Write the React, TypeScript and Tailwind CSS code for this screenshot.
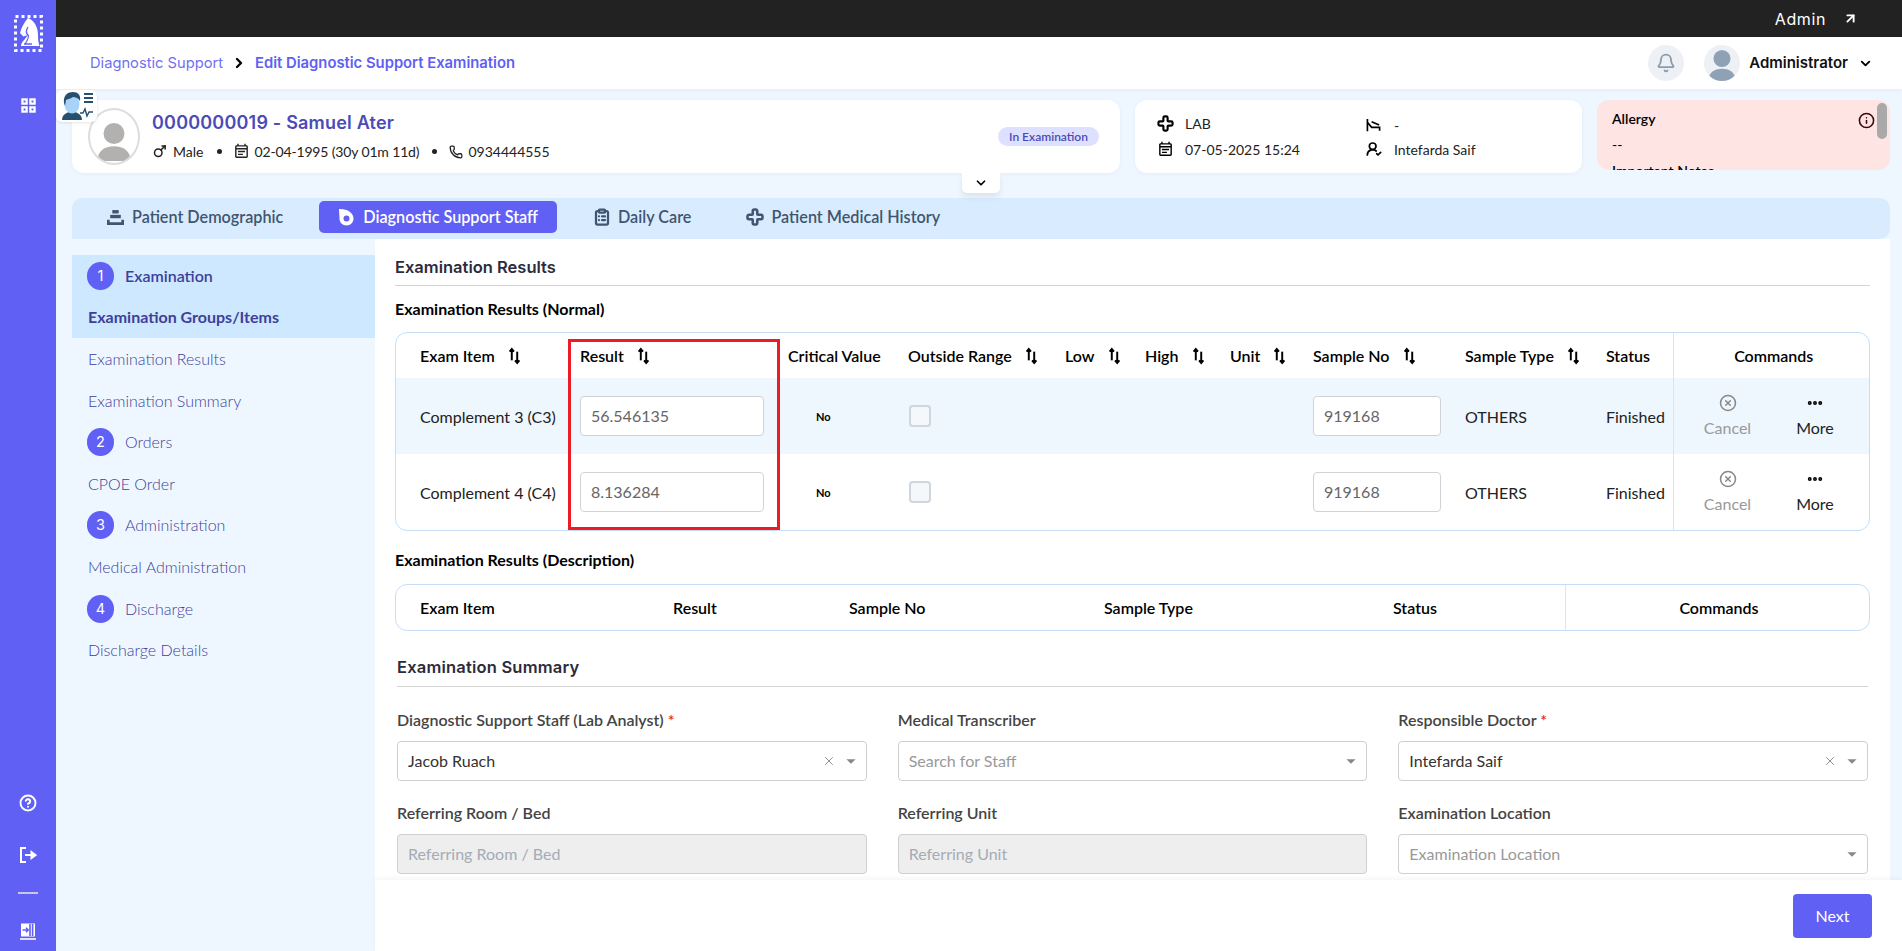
import { ArrowUpRight, Bell, ChevronDown, ChevronRight, CircleHelp, CircleX, ClipboardList, Cross, Ellipsis, Info, Mars, Phone, UserRoundCheck, X } from 'lucide-react';
import { MdArrowDropDown, MdOutlineEventNote } from 'react-icons/md';

const heading = "font-['Inter',sans-serif]";

function SortIcon() {
  return (
    <svg viewBox="0 0 12 16" className="h-[18px] w-[13px] shrink-0 text-black" fill="none" stroke="currentColor" strokeWidth="1.800">
      <path d="M3.500 12V2" />
      <path d="M1.500 4 3.500 1.600 5.500 4" fill="currentColor" />
      <path d="M8.500 14V4" />
      <path d="M6.500 12 8.500 14.400 10.500 12" fill="currentColor" />
    </svg>
  );
}

function Avatar({ color, size }: { color: string; size: string }) {
  return (
    <svg viewBox="0 0 40 40" className={size}>
      <circle cx="20" cy="15" r="9.500" fill={color} />
      <path d="M5 40c0-9 6-13.500 15-13.500S35 31 35 40z" fill={color} />
    </svg>
  );
}

function Logo() {
  return (
    <svg viewBox="0 0 29 37" className="mt-[15px] h-[37px] w-[29px]">
      <rect x="1.500" y="1.500" width="26" height="34" fill="none" stroke="white" strokeWidth="3" strokeDasharray="3 3" />
      <path d="M14 3c6 2 10 9 10 17 0 5 .5 8 1.500 11H7c0-4 5-7 6.500-11l-4 1.500L6 18c1.500-6 4-10 8-15z" fill="white" />
      <path d="M14 12c-2 3-2 6 0 8 1.500 2-1 6-3 9M10 29h8" fill="none" stroke="#6060f5" strokeWidth="1.300" />
    </svg>
  );
}

function Rail() {
  return (
    <aside className="flex h-full w-[56px] shrink-0 flex-col items-center bg-[#6060f5]">
      <Logo />
      <svg viewBox="0 0 16 16" className="mt-[46px] h-[15px] w-[15px]" fill="none" stroke="white" strokeWidth="2.400">
        <rect x="1.500" y="1.500" width="4.500" height="4.500" />
        <rect x="10" y="1.500" width="4.500" height="4.500" />
        <rect x="1.500" y="10" width="4.500" height="4.500" />
        <rect x="10" y="10" width="4.500" height="4.500" />
      </svg>
      <div className="mt-auto flex flex-col items-center pb-[11px]">
        <CircleHelp className="h-[18px] w-[18px] text-white" strokeWidth={2.6} />
        <svg viewBox="0 0 18 18" className="mt-[34px] h-[18px] w-[18px]" fill="none" stroke="white" strokeWidth="2">
          <path d="M7 2H2v14h5" />
          <path d="M6 9h8" />
          <path d="M12.500 6 16.500 9l-4 3z" fill="white" />
        </svg>
        <div className="mt-[28px] h-[2px] w-[20px] bg-[#c8c8dc]" />
        <svg viewBox="0 0 18 18" className="mt-[28px] h-[18px] w-[18px]" fill="none" stroke="white" strokeWidth="1.600">
          <rect x="2" y="1.500" width="14" height="13" fill="white" stroke="none" />
          <path d="M11 2v12M13.600 2v12M3.500 8H9M7 5.800 9.200 8 7 10.200" stroke="#6060f5" />
          <path d="M1 17h16" />
        </svg>
      </div>
    </aside>
  );
}

function Header() {
  return (
    <>
      <div className="flex h-[37px] shrink-0 items-center justify-end bg-[#222222] pr-[44px] text-white">
        <span className={`${heading} text-[16px] tracking-[0.6px]`}>Admin</span>
        <ArrowUpRight className="ml-[17px] h-[15px] w-[15px]" strokeWidth={3} />
      </div>
      <div className="relative z-10 flex h-[52px] shrink-0 items-center bg-white pl-[34px] pr-[29px] shadow-[0_1px_4px_rgba(0,0,0,0.05)]">
        <span className={`${heading} text-[14.700px] text-[#6f6ff2]`}>Diagnostic Support</span>
        <ChevronRight className="mx-[8px] h-[16px] w-[16px] text-black" strokeWidth={3.5} />
        <span className={`${heading} text-[14.800px] font-semibold text-[#6060f5]`}>Edit Diagnostic Support Examination</span>
        <div className="ml-auto flex h-[36px] w-[36px] items-center justify-center rounded-full bg-[#edf0f5]">
          <Bell className="h-[20px] w-[20px] text-[#8a9bad]" strokeWidth={2.2} />
        </div>
        <div className="ml-[20px] flex h-[36px] w-[36px] items-center justify-center overflow-hidden rounded-full bg-[#edf0f5]">
          <Avatar color="#8fa2b5" size="h-[36px] w-[36px]" />
        </div>
        <span className={`${heading} ml-[9px] text-[15px] font-semibold text-[#111]`}>Administrator</span>
        <ChevronDown className="ml-[10px] h-[15px] w-[15px] text-black" strokeWidth={3} />
      </div>
    </>
  );
}

function PatientRow() {
  return (
    <div className="relative flex shrink-0 items-start gap-[15px] pl-[16px] pr-[12px] pt-[11px] text-[14px]">
      <div className="relative flex h-[73px] w-[1048px] items-center rounded-[12px] bg-white pl-[16px] pr-[21px] shadow-[0_1px_4px_rgba(60,90,130,0.05)]">
        <div className="flex h-[57px] w-[52px] items-end justify-center overflow-hidden rounded-[50%] border-2 border-[#dddddd] bg-white">
          <Avatar color="#b3b1af" size="h-[48px] w-[44px]" />
        </div>
        <div className="ml-[12px] flex flex-col pt-[1px]">
          <div className={`${heading} text-[18px] font-semibold leading-[24px] tracking-[0.2px] text-[#4b4bb8]`}>0000000019 - Samuel Ater</div>
          <div className="mt-[5px] flex h-[24px] items-center text-[#222]">
            <Mars className="h-[15px] w-[15px]" strokeWidth={2.4} />
            <span className="ml-[6px]">Male</span>
            <span className="ml-[14px] h-[5px] w-[5px] rounded-full bg-[#222]" />
            <MdOutlineEventNote className="ml-[11px] h-[17px] w-[17px]" />
            <span className="ml-[4px] tracking-[-0.15px]">02-04-1995 (30y 01m 11d)</span>
            <span className="ml-[13px] h-[5px] w-[5px] rounded-full bg-[#222]" />
            <Phone className="ml-[12px] h-[14px] w-[14px]" strokeWidth={2.2} />
            <span className="ml-[5px]">0934444555</span>
          </div>
        </div>
        <span className="ml-auto flex h-[19px] w-[101px] items-center justify-center rounded-full bg-[#dde1ff] text-[12px] font-semibold text-[#4b4bb8]">In Examination</span>
      </div>
      <div className="flex h-[73px] w-[447px] rounded-[12px] bg-white pl-[22px] pt-[10px] text-[#222] shadow-[0_1px_4px_rgba(60,90,130,0.05)]">
        <div className="flex w-[209px] flex-col">
          <div className="flex h-[26px] items-center">
            <Cross className="h-[17px] w-[17px] text-black" strokeWidth={3} />
            <span className="ml-[11px]">LAB</span>
          </div>
          <div className="flex h-[26px] items-center">
            <MdOutlineEventNote className="h-[17px] w-[17px] text-black" />
            <span className="ml-[11px]">07-05-2025 15:24</span>
          </div>
        </div>
        <div className="flex flex-col">
          <div className="flex h-[26px] items-center pt-[5px]">
            <svg viewBox="0 0 16 16" className="h-[15px] w-[15px]" fill="none" stroke="black" strokeWidth="1.800">
              <path d="M1.500 1v13M1.500 4.500 6 10h8.500v3.500M6 4l8 3.500" />
            </svg>
            <span className="ml-[13px]">-</span>
          </div>
          <div className="flex h-[26px] items-center">
            <UserRoundCheck className="h-[16px] w-[16px] text-black" strokeWidth={2.6} />
            <span className="ml-[12px]">Intefarda Saif</span>
          </div>
        </div>
      </div>
      <div className="relative h-[70px] w-[293px] overflow-hidden rounded-[12px] bg-[#ffe4e4] pl-[15px] pt-[9px] text-[14px] text-black">
        <div className="font-semibold leading-[20px]">Allergy</div>
        <div className="mt-[6px] leading-[20px]">--</div>
        <div className="mt-[6px] font-semibold leading-[20px]">Important Notes</div>
        <Info className="absolute right-[15px] top-[12px] h-[17px] w-[17px] text-[#3a0808]" strokeWidth={2.2} />
        <div className="absolute right-[3px] top-[3px] h-[36px] w-[10px] rounded-full bg-[#a9a9a9]" />
      </div>
      <div className="absolute left-[906px] top-[84px] z-10 flex h-[20px] w-[38px] items-center justify-center rounded-b-[5px] bg-white shadow-[0_4px_6px_rgba(0,0,0,0.08)]">
        <ChevronDown className="h-[14px] w-[14px] text-black" strokeWidth={3} />
      </div>
    </div>
  );
}

function DiagnosticIcon() {
  return (
    <svg viewBox="0 0 16 18" className="h-[18px] w-[16px]">
      <path
        fillRule="evenodd"
        fill="white"
        d="M1 1c3.500 0 9 .5 11.500 3.500C14.400 6 15.500 8 15.500 10.500 15.500 14.500 12.500 17.500 8.500 17.500S1.500 14.500 1.500 10.500C1.500 7 1 4 1 1ZM8.500 7.500a3 3 0 1 0 0 6 3 3 0 0 0 0-6Z"
      />
    </svg>
  );
}

function Tabs() {
  return (
    <div className="mx-[12px] ml-[16px] mt-[25px] flex h-[41px] shrink-0 items-start gap-[17px] rounded-t-[10px] rounded-br-[10px] bg-[#d9ecff] pl-[16px] pt-[3px] text-[16.200px] font-semibold text-[#3f5570]">
      <div className="flex h-[32px] items-center gap-[8px] px-[19px]">
        <svg viewBox="0 0 16 16" className="h-[17px] w-[17px]" fill="#3f5570">
          <rect x="5" y="1" width="6" height="3.200" />
          <rect x="3" y="5.500" width="10" height="3.200" />
          <path d="M0 10h2.500v2.500h11V10H16v5H0z" />
        </svg>
        Patient Demographic
      </div>
      <div className="flex h-[32px] items-center gap-[9px] rounded-[5px] bg-[#6060f5] px-[19px] text-white">
        <DiagnosticIcon />
        Diagnostic Support Staff
      </div>
      <div className="flex h-[32px] items-center gap-[7px] px-[19px]">
        <ClipboardList className="h-[18px] w-[18px]" strokeWidth={3} />
        Daily Care
      </div>
      <div className="flex h-[32px] items-center gap-[7px] px-[19px]">
        <Cross className="h-[18px] w-[18px]" strokeWidth={3.4} />
        Patient Medical History
      </div>
    </div>
  );
}

function StepRow({ n, label, active }: { n: number; label: string; active?: boolean }) {
  return (
    <div className={`flex h-[41.600px] items-center pl-[15px] text-[16px] text-[#3f3f9a] ${active ? 'bg-[#cde8ff] font-semibold' : 'font-light'}`}>
      <span className={`${heading} flex h-[28px] w-[27px] items-center justify-center rounded-full bg-[#6060f5] text-[14.500px] font-normal text-white`}>{n}</span>
      <span className="ml-[11px]">{label}</span>
    </div>
  );
}

function SubRow({ label, active }: { label: string; active?: boolean }) {
  return (
    <div className={`flex h-[41.600px] items-center pl-[16px] text-[16px] text-[#3f3f9a] ${active ? 'bg-[#cde8ff] font-bold' : 'font-light'}`}>{label}</div>
  );
}

function StepMenu() {
  return (
    <nav className="h-full w-[303px] shrink-0 bg-[#eef7ff] pt-[16px]">
      <StepRow n={1} label="Examination" active />
      <SubRow label="Examination Groups/Items" active />
      <SubRow label="Examination Results" />
      <SubRow label="Examination Summary" />
      <StepRow n={2} label="Orders" />
      <SubRow label="CPOE Order" />
      <StepRow n={3} label="Administration" />
      <SubRow label="Medical Administration" />
      <StepRow n={4} label="Discharge" />
      <SubRow label="Discharge Details" />
    </nav>
  );
}

const normalCols = [172, 208, 120, 157, 80, 85, 83, 152, 141, 79, 196];
const normalHead: [string, boolean][] = [
  ['Result', true],
  ['Critical Value', false],
  ['Outside Range', true],
  ['Low', true],
  ['High', true],
  ['Unit', true],
  ['Sample No', true],
  ['Sample Type', true],
  ['Status', false],
];

function TextBox({ value, w }: { value: string; w: string }) {
  return (
    <div className={`flex h-[40px] ${w} items-center rounded-[4px] border border-[#cfd3d8] bg-white pl-[10px] text-[16px] text-[#666]`}>{value}</div>
  );
}

function ResultRow({ name, result, shaded }: { name: string; result: string; shaded?: boolean }) {
  const cell = 'p-0 pl-[12px] align-middle';
  const textCell = 'p-0 pl-[12px] pt-[2px] align-middle';
  return (
    <tr className={`h-[76px] text-[16px] text-[#222] ${shaded ? 'bg-[#eef6fe]' : ''}`}>
      <td className="p-0 pl-[24px] pt-[2px] align-middle">{name}</td>
      <td className={cell}><TextBox value={result} w="w-[184px]" /></td>
      <td className="p-0 pl-[40px] pt-[2px] align-middle text-[11px] font-bold text-black">No</td>
      <td className={cell}><div className="ml-[1px] h-[22px] w-[22px] rounded-[4px] border-2 border-[#cfd6dd] bg-[#f5f8fb]" /></td>
      <td />
      <td />
      <td />
      <td className={cell}><TextBox value="919168" w="w-[128px]" /></td>
      <td className={textCell}>OTHERS</td>
      <td className={textCell}>Finished</td>
      <td className="border-l border-[#d5e6f5] p-0 pt-[2px] align-middle">
        <div className="flex justify-between px-[30px]">
          <div className="flex w-[48px] flex-col items-center gap-[4px] text-[#999]">
            <CircleX className="h-[18px] w-[18px] text-[#888]" strokeWidth={2} />
            Cancel
          </div>
          <div className="flex w-[48px] flex-col items-center gap-[4px]">
            <Ellipsis className="h-[18px] w-[18px] text-black" strokeWidth={3.2} />
            More
          </div>
        </div>
      </td>
    </tr>
  );
}

function NormalTable() {
  return (
    <div className="relative mt-[12px] w-[1475px] rounded-[12px] border border-[#c5def5]">
      <table className="w-full table-fixed border-collapse">
        <colgroup>
          {normalCols.map((w, i) => (
            <col key={i} style={{ width: w }} />
          ))}
        </colgroup>
        <thead>
          <tr className="h-[45px] text-[16px] font-semibold text-black">
            <th className="p-0 pl-[24px] text-left font-semibold">
              <span className="flex items-center gap-[13px]">Exam Item <SortIcon /></span>
            </th>
            {normalHead.map(([label, sort]) => (
              <th key={label} className="p-0 pl-[12px] text-left font-semibold">
                <span className="flex items-center gap-[13px] whitespace-nowrap">
                  {label}
                  {sort && <SortIcon />}
                </span>
              </th>
            ))}
            <th className="border-l border-[#d5e6f5] p-0 pl-[5px] text-center font-semibold">Commands</th>
          </tr>
        </thead>
        <tbody>
          <ResultRow name="Complement 3 (C3)" result="56.546135" shaded />
          <ResultRow name="Complement 4 (C4)" result="8.136284" />
        </tbody>
      </table>
      <div className="absolute left-[172px] top-[6px] h-[191px] w-[212px] border-[3px] border-[#ed1c24]" />
    </div>
  );
}

function DescriptionTable() {
  return (
    <div className="mt-[12px] flex h-[47px] w-[1475px] items-center rounded-[12px] border border-[#c5def5] text-[16px] font-semibold text-black">
      <div className="w-[277px] pl-[24px]">Exam Item</div>
      <div className="w-[176px]">Result</div>
      <div className="w-[255px]">Sample No</div>
      <div className="w-[289px]">Sample Type</div>
      <div className="w-[172px]">Status</div>
      <div className="flex h-full flex-1 items-center justify-center border-l border-[#d5e6f5] pl-[3px]">Commands</div>
    </div>
  );
}

function Field({ label, required, value, placeholder, clear, disabled, select }: { label: string; required?: boolean; value?: string; placeholder?: string; clear?: boolean; disabled?: boolean; select?: boolean }) {
  return (
    <div className="flex flex-col">
      <div className="h-[22px] text-[16px] font-semibold leading-[19px] text-[#444]">
        {label}
        {required && <span className="text-[#ed1c24]"> *</span>}
      </div>
      <div className={`mt-[9px] flex h-[40px] items-center rounded-[4px] border border-[#cfcfcf] pl-[10px] pr-[4px] text-[16px] leading-[20px] ${disabled ? 'bg-[#eeeeee] text-[#a3acb5]' : 'bg-white'}`}>
        <span className={`flex-1 pb-[1px] ${value ? 'text-[#333]' : disabled ? 'text-[#a3acb5]' : 'text-[#999]'}`}>{value ?? placeholder}</span>
        {clear && <X className="mr-[4px] h-[14px] w-[14px] text-[#888]" strokeWidth={1.6} />}
        {select && <MdArrowDropDown className="h-[22px] w-[22px] text-[#888]" />}
      </div>
    </div>
  );
}

function MainPanel() {
  return (
    <main className="flex h-full min-w-0 flex-1 flex-col">
      <div className="mr-[12px] min-h-0 flex-1 overflow-hidden bg-white pl-[20px] pr-[20px] pt-[16px]">
        <h2 className={`${heading} text-[16.500px] font-semibold leading-[24px] text-[#2b2b3d]`}>Examination Results</h2>
        <div className="mt-[6px] h-px w-[1475px] bg-[#d4d4d4]" />
        <h3 className="mt-[12px] text-[16px] font-bold leading-[22px] text-black">Examination Results (Normal)</h3>
        <NormalTable />
        <h3 className="mt-[18px] text-[16px] font-bold leading-[22px] text-black">Examination Results (Description)</h3>
        <div className="pt-px"><DescriptionTable /></div>
        <div className="ml-[2px] w-[1471px]">
          <h2 className={`${heading} mt-[24px] text-[16.500px] font-semibold leading-[24px] tracking-[0.2px] text-[#2b2b3d]`}>Examination Summary</h2>
          <div className="mt-[7px] h-px bg-[#d4d4d4]" />
          <div className="mt-[23px] grid grid-cols-3 gap-x-[31px] gap-y-[22px]">
            <Field label="Diagnostic Support Staff (Lab Analyst)" required value="Jacob Ruach" clear select />
            <Field label="Medical Transcriber" placeholder="Search for Staff" select />
            <Field label="Responsible Doctor" required value="Intefarda Saif" clear select />
            <Field label="Referring Room / Bed" placeholder="Referring Room / Bed" disabled />
            <Field label="Referring Unit" placeholder="Referring Unit" disabled />
            <Field label="Examination Location" placeholder="Examination Location" select />
          </div>
        </div>
      </div>
      <div className="flex h-[71px] shrink-0 items-center justify-end bg-white pr-[30px] shadow-[0_-2px_4px_rgba(0,0,0,0.04)]">
        <button className="h-[44px] w-[79px] rounded-[4px] bg-[#6060f5] text-[16px] text-white">Next</button>
      </div>
    </main>
  );
}

export default function App() {
  return (
    <div className="flex h-screen w-full overflow-hidden bg-[#eef6ff] font-['Lato',sans-serif]">
      <Rail />
      <div className="relative flex min-w-0 flex-1 flex-col">
        <Header />
        <PatientRow />
        <Tabs />
        <div className="flex min-h-0 flex-1 pl-[16px]">
          <StepMenu />
          <MainPanel />
        </div>
        <div className="absolute left-0 top-[90px] z-20 flex h-[32px] w-[41px] items-center justify-center rounded-[6px] bg-white shadow-[0_1px_3px_rgba(0,0,0,0.1)]">
          <svg viewBox="0 0 34 30" className="h-[30px] w-[34px]">
            <path d="M2 29c0-5 4-7 7-8h6c3 1 7 3 7 8z" fill="#27506f" />
            <ellipse cx="12" cy="13" rx="7.500" ry="9.500" fill="#a6d3f7" />
            <path d="M4 12C3 4 8 1 13 1s8 3 7 9c-2-3-4-4-7-4-3 2-6 2-7 3l-1 6z" fill="#27506f" />
            <path d="M24 3h9M24 7h9M24 11h9" stroke="#27506f" strokeWidth="2.200" />
            <path d="M20 22h3l2-4 2 7 2-4h4" stroke="#27506f" strokeWidth="1.400" fill="none" />
          </svg>
        </div>
      </div>
    </div>
  );
}
